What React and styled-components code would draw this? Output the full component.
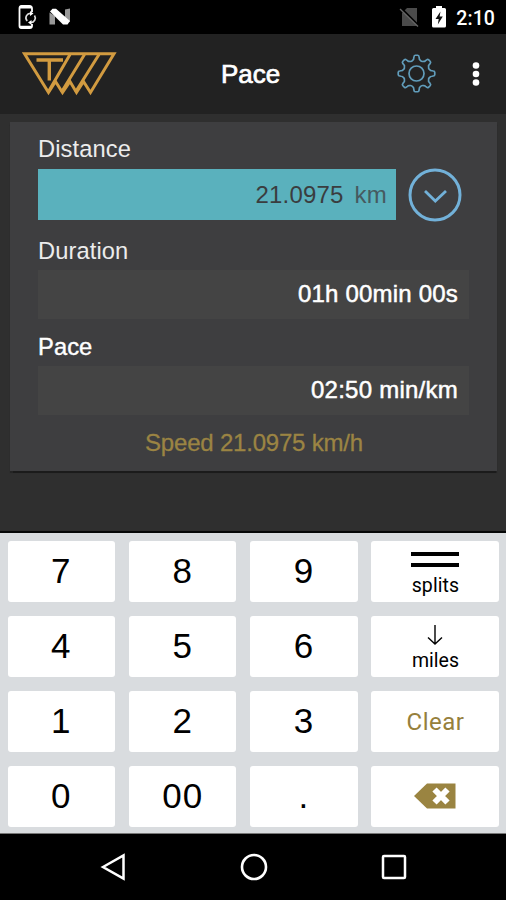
import React from "react";
import styled, { createGlobalStyle } from "styled-components";

const GlobalStyle = createGlobalStyle`
  * { box-sizing: border-box; }
  body { margin: 0; background: #000; }
  svg { display: block; flex: none; }
`;

const Screen = styled.div`
  width: 506px;
  height: 900px;
  overflow: hidden;
  display: flex;
  flex-direction: column;
  background: #2f2f2f;
  font-family: "Liberation Sans", Arial, sans-serif;
`;

const StatusBar = styled.div`
  height: 34px;
  background: #000;
  display: flex;
  align-items: center;
  padding: 0 11px 0 17px;
`;

const Clock = styled.span`
  margin-left: 9px;
  font: 500 19.5px/34px Roboto, sans-serif;
  letter-spacing: 0.1px;
  color: #fff;
  padding-top: 3px;
`;

const Spacer = styled.div`
  flex: 1;
`;

const Header = styled.header`
  height: 80px;
  background: #222;
  display: grid;
  grid-template-columns: 140px 1fr 60px 34px;
  align-items: center;
  padding: 0 15px 0 16px;
`;

const Title = styled.h1`
  margin: 0 0 0 65px;
  font-size: 26px;
  font-weight: 400;
  line-height: 32px;
  color: #fff;
  -webkit-text-stroke: 0.7px #fff;
`;

const Main = styled.main`
  height: 417px;
  padding: 8px 9px 0 10px;
`;

const Card = styled.section`
  height: 349px;
  padding: 12px 28px 0;
  background: #3e3e40;
  box-shadow: 0 1.5px 1px #1b1b1b;
`;

const Label = styled.div`
  height: 30px;
  margin: ${(p) => p.$margin};
  font-size: 23.7px;
  line-height: 30px;
  letter-spacing: 0.1px;
  color: ${(p) => (p.$strong ? "#fff" : "#ececec")};
  -webkit-text-stroke: ${(p) => (p.$strong ? "0.4px #fff" : "0")};
`;

const FieldRow = styled.div`
  height: 51px;
  display: flex;
  align-items: center;
  gap: 12px;
`;

const Field = styled.div`
  width: ${(p) => (p.$active ? 358 : 431)}px;
  height: ${(p) => (p.$active ? 51 : 49)}px;
  padding: 0 ${(p) => (p.$active ? 9 : 11)}px ${(p) => (p.$active ? 0 : 2)}px 0;
  display: flex;
  align-items: center;
  justify-content: flex-end;
  gap: 11px;
  background: ${(p) => (p.$active ? "#5ab1bd" : "#444444")};
  color: ${(p) => (p.$active ? "#3a3d3f" : "#fff")};
  -webkit-text-stroke: ${(p) => (p.$active ? "0" : "0.5px #fff")};
  font-size: 24px;
  letter-spacing: ${(p) => p.$spacing};
  white-space: pre;
`;

const Unit = styled.span`
  color: #465a60;
`;

const Speed = styled.div`
  margin-top: 13px;
  padding-left: 1px;
  line-height: 30px;
  font-size: 24px;
  letter-spacing: -0.2px;
  text-align: center;
  color: #9b8443;
  -webkit-text-stroke: 0.3px #9b8443;
`;

const Keypad = styled.div`
  height: 303px;
  border-top: 2px solid #060808;
  border-bottom: 1px solid #777;
  background: #d9dcdf;
  display: grid;
  grid-template-columns: 107.5px 107.5px 107.5px 128px;
  grid-template-rows: repeat(4, 61px);
  column-gap: 13.8px;
  row-gap: 14px;
  padding: 7.6px 6px 0 7.6px;
`;

const Key = styled.button`
  border: 0;
  border-radius: 3px;
  padding: 0;
  background: #fff;
  display: flex;
  flex-direction: column;
  align-items: center;
  justify-content: ${(p) => (p.$stacked ? "flex-start" : "center")};
  padding-top: ${(p) => p.$stacked || "0"};
  font: 400 35px/40px "Liberation Sans", Arial, sans-serif;
  letter-spacing: 1px;
  color: #000;
`;

const KeyCaption = styled.span`
  margin-top: ${(p) => p.$gap};
  font: 400 19.5px/24px Roboto, sans-serif;
  letter-spacing: ${(p) => p.$spacing};
`;

const ClearText = styled.span`
  font: 400 24px/30px Roboto, sans-serif;
  letter-spacing: 0.5px;
  color: #96803c;
  padding-top: 1px;
`;

const NavBar = styled.nav`
  height: 66px;
  background: #000;
  display: flex;
  justify-content: space-between;
  align-items: center;
  padding: 0 99px 0 100px;
`;

const SyncPhone = () => (
  <svg width="20" height="26" viewBox="0 0 20 26" fill="none">
    <path d="M15 8V4.500Q15 2 12.500 2H4.500Q2.500 2 2.500 4.500V22Q2.500 24 4.500 24H12.500Q15 24 15 22V20" stroke="#fff" strokeWidth="1.800" />
    <path d="M3 3.300H14.500M3 23H14.500" stroke="#fff" strokeWidth="2.600" />
    <path d="M14.500 9.500A4.500 4.500 0 0 0 10.200 17M13.500 18.500A4.500 4.500 0 0 0 17.500 11.500" stroke="#ddd" strokeWidth="1.600" />
    <path d="M13 7v5l3.500-2.500zM14.500 21v-5l-3.500 2.500z" fill="#fff" />
  </svg>
);

const Nougat = styled(({ className }) => (
  <svg className={className} width="22" height="18" viewBox="0 0 22 18">
    <path d="M.5 4.500L6 8V16.500H.5zM16 1.500L21 .5V14L16 10z" fill="#999" />
    <path d="M1 3.500L3.500 .8H7L21 13L18.500 16.500H14z" fill="#fff" />
  </svg>
))`
  margin-left: 12px;
`;

const NoSim = () => (
  <svg width="22" height="22" viewBox="0 0 22 22">
    <path d="M8 2H18V20H3V7z" fill="#4b4b4b" />
    <path d="M2 2L20 20" stroke="#000" strokeWidth="2" />
    <path d="M1 3L19 20.500" stroke="#666" strokeWidth="1.300" />
  </svg>
);

const Battery = styled(({ className }) => (
  <svg className={className} width="16" height="22" viewBox="0 0 16 22">
    <path d="M5 0H11V2H13.500Q15 2 15 3.500V20Q15 21.500 13.500 21.500H2.500Q1 21.500 1 20V3.500Q1 2 2.500 2H5z" fill="#fff" />
    <path d="M9.500 5.500L4.500 13H7.700L6.800 18.500L11.800 10.500H8.600z" fill="#111" />
  </svg>
))`
  margin-left: 10px;
`;

const Logo = () => (
  <svg width="108" height="52" viewBox="0 2.5 108 52" fill="none" stroke="#d29b40" strokeWidth="3">
    <path d="M8.500 8.300H98L74.500 47L67.500 36L60.500 47L54 36L46.500 47L39.500 36L32.500 47Z" />
    <path d="M54 9L32.500 46M68.500 9L45.500 46.500M83 9L59.500 46.500" />
    <path d="M20.500 14.500H47M33.300 14.500V35" strokeWidth="3.400" />
  </svg>
);

const gearOutline = (() => {
  const cx = 20, cy = 20;
  const at = (deg, r) => {
    const a = (deg * Math.PI) / 180;
    return `${(cx + r * Math.sin(a)).toFixed(2)} ${(cy - r * Math.cos(a)).toFixed(2)}`;
  };
  const parts = [];
  for (let i = 0; i < 8; i++) {
    const d = i * 45;
    parts.push(`${i ? "L" : "M"}${at(d - 16, 13.8)}`);
    parts.push(`Q${at(d - 11, 14.1)} ${at(d - 10, 15.8)}`);
    parts.push(`L${at(d - 8.5, 17)} Q${at(d - 7.5, 18.3)} ${at(d - 4, 18.3)} L${at(d + 4, 18.3)}`);
    parts.push(`Q${at(d + 7.5, 18.3)} ${at(d + 8.5, 17)} L${at(d + 10, 15.8)}`);
    parts.push(`Q${at(d + 11, 14.1)} ${at(d + 16, 13.8)} Q${at(d + 22.5, 12.7)} ${at(d + 29, 13.8)}`);
  }
  return parts.join(" ") + "Z";
})();

const Gear = () => (
  <svg width="40" height="40" viewBox="0.5 0.5 40 40" fill="none" stroke="#619dbb" strokeWidth="1.700">
    <path d={gearOutline} />
    <circle cx="20" cy="20" r="7.500" />
  </svg>
);

const More = styled(({ className }) => (
  <svg className={className} width="8" height="26" viewBox="0 0 8 26" fill="#fff">
    <circle cx="4" cy="4.500" r="3.300" />
    <circle cx="4" cy="13" r="3.300" />
    <circle cx="4" cy="21.500" r="3.300" />
  </svg>
))`
  margin-left: 15px;
`;

const ChevronCircle = () => (
  <svg width="54" height="54" viewBox="0 0 54 54" fill="none" stroke="#72b1d9">
    <circle cx="27" cy="27" r="25" strokeWidth="3" />
    <path d="M17 23L27.300 33L38 23" strokeWidth="2.800" />
  </svg>
);

const Bars = () => (
  <svg width="48" height="18" viewBox="0 0 48 18">
    <path d="M0 3H48M0 14H48" stroke="#000" strokeWidth="4" />
  </svg>
);

const DownArrow = () => (
  <svg width="16" height="21" viewBox="0 0 16 21" fill="none" stroke="#000" strokeWidth="1.400">
    <path d="M8 0V19M1 12.500L8 19L15 12.500" />
  </svg>
);

const Backspace = () => (
  <svg width="42" height="26" viewBox="0 0 42 26">
    <path d="M0 13L13 .5H41.500V25.500H13z" fill="#9a8441" />
    <path d="M20.500 6.500L33.500 19.500M33.500 6.500L20.500 19.500" stroke="#fff" strokeWidth="6" />
  </svg>
);

export default function App() {
  return (
    <>
      <GlobalStyle />
      <Screen>
        <StatusBar>
          <SyncPhone />
          <Nougat />
          <Spacer />
          <NoSim />
          <Battery />
          <Clock>2:10</Clock>
        </StatusBar>
        <Header>
          <Logo />
          <Title>Pace</Title>
          <Gear />
          <More />
        </Header>
        <Main>
          <Card>
            <Label $margin="0 0 5px">Distance</Label>
            <FieldRow>
              <Field $active $spacing="0.2px">
                <span>21.0975</span>
                <Unit>km</Unit>
              </Field>
              <ChevronCircle />
            </FieldRow>
            <Label $margin="16px 0 4px">Duration</Label>
            <Field $spacing="0.2px">01h 00min 00s</Field>
            <Label $strong $margin="13px 0 4px">Pace</Label>
            <Field $spacing="0.25px">02:50 min/km</Field>
            <Speed>Speed 21.0975 km/h</Speed>
          </Card>
        </Main>
        <Keypad>
          <Key>7</Key>
          <Key>8</Key>
          <Key>9</Key>
          <Key $stacked="10px">
            <Bars />
            <KeyCaption $gap="5px" $spacing="0.1px">splits</KeyCaption>
          </Key>
          <Key>4</Key>
          <Key>5</Key>
          <Key>6</Key>
          <Key $stacked="9px">
            <DownArrow />
            <KeyCaption $gap="3px" $spacing="0px">miles</KeyCaption>
          </Key>
          <Key>1</Key>
          <Key>2</Key>
          <Key>3</Key>
          <Key>
            <ClearText>Clear</ClearText>
          </Key>
          <Key>0</Key>
          <Key>00</Key>
          <Key>.</Key>
          <Key>
            <Backspace />
          </Key>
        </Keypad>
        <NavBar>
          <svg width="27" height="28" viewBox="0 0 27 28" fill="none" stroke="#fff" strokeWidth="2.500">
            <path d="M3 14L23.500 2.500V25.500Z" />
          </svg>
          <svg width="28" height="28" viewBox="0 0 28 28" fill="none" stroke="#fff" strokeWidth="2.600">
            <circle cx="14" cy="14" r="12" />
          </svg>
          <svg width="26" height="26" viewBox="0 0 26 26" fill="none" stroke="#fff" strokeWidth="2.500">
            <rect x="2" y="2" width="22" height="22" rx="1" />
          </svg>
        </NavBar>
      </Screen>
    </>
  );
}
